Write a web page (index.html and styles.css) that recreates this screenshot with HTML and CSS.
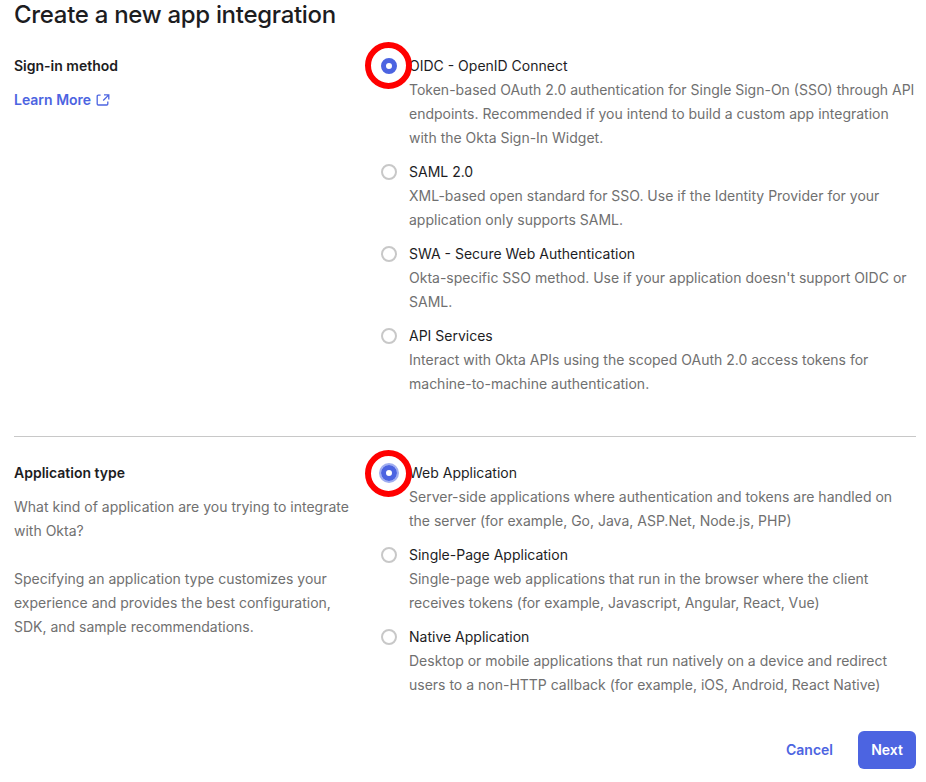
FILE: index.html
```html
<!DOCTYPE html>
<html lang="en">
<head>
<meta charset="utf-8">
<title>Create a new app integration</title>
<link rel="stylesheet" href="styles.css">
</head>
<body>
<main class="dialog">
  <h1 class="title">Create a new app integration</h1>
  <section class="section section-method">
    <div class="side">
      <h2 class="label">Sign-in method</h2>
      <a class="learn">Learn More
        <svg class="external" width="14" height="14" viewBox="0 0 14 14" fill="none" stroke="currentColor" stroke-width="1.3"><path d="M4.6 2.2H2.3Q1.2 2.2 1.2 3.3v7.6Q1.2 12 2.3 12h8.4Q11.8 12 11.8 10.9V8.4M8 1.9h4.8v4.5M12.6 2.1 7.2 7.5"/></svg>
      </a>
    </div>
    <div class="options">
      <div class="option"><span class="radio checked"><span class="ring"></span></span><div class="name">OIDC - OpenID Connect</div><div class="desc">Token-based OAuth 2.0 authentication for Single Sign-On (SSO) through API<br>endpoints. Recommended if you intend to build a custom app integration<br>with the Okta Sign-In Widget.</div></div>
      <div class="option"><span class="radio"></span><div class="name">SAML 2.0</div><div class="desc">XML-based open standard for SSO. Use if the Identity Provider for your<br>application only supports SAML.</div></div>
      <div class="option"><span class="radio"></span><div class="name">SWA - Secure Web Authentication</div><div class="desc">Okta-specific SSO method. Use if your application doesn't support OIDC or<br>SAML.</div></div>
      <div class="option"><span class="radio"></span><div class="name">API Services</div><div class="desc">Interact with Okta APIs using the scoped OAuth 2.0 access tokens for<br>machine-to-machine authentication.</div></div>
    </div>
  </section>
  <section class="section section-type">
    <div class="side">
      <h2 class="label">Application type</h2>
      <p class="hint">What kind of application are you trying to integrate<br>with Okta?</p>
      <p class="hint">Specifying an application type customizes your<br>experience and provides the best configuration,<br>SDK, and sample recommendations.</p>
    </div>
    <div class="options">
      <div class="option"><span class="radio checked focused"><span class="ring"></span></span><div class="name">Web Application</div><div class="desc">Server-side applications where authentication and tokens are handled on<br>the server (for example, Go, Java, ASP.Net, Node.js, PHP)</div></div>
      <div class="option"><span class="radio"></span><div class="name">Single-Page Application</div><div class="desc">Single-page web applications that run in the browser where the client<br>receives tokens (for example, Javascript, Angular, React, Vue)</div></div>
      <div class="option"><span class="radio"></span><div class="name">Native Application</div><div class="desc">Desktop or mobile applications that run natively on a device and redirect<br>users to a non-HTTP callback (for example, iOS, Android, React Native)</div></div>
    </div>
  </section>
  <footer class="actions"><button class="btn cancel">Cancel</button><button class="btn next">Next</button></footer>
</main>
</body>
</html>
```
FILE: styles.css
```css
* { box-sizing: border-box; }
body { margin: 0; background: #fff; color: #1d1d1f; font: 14px/24px Inter, sans-serif; overflow: hidden; }
.dialog { padding: 0 10px 0 14px; white-space: nowrap; }
.title { margin: 0; height: 54px; font-size: 24px; line-height: 30px; font-weight: 500; letter-spacing: -0.3px; }
.section { display: grid; grid-template-columns: 367px 1fr; }
.section-method { height: 383px; border-bottom: 1px solid #c8c8c8; }
.section-type { padding-top: 24px; height: 294px; }
.label { margin: 0 0 10px; font-size: 14px; font-weight: 600; line-height: 24px; }
.learn { display: inline-flex; align-items: center; gap: 5px; color: #4c64e1; font-weight: 600; }
.hint { margin: 0 0 24px; color: #707070; }
.option { display: grid; grid-template-columns: 28px 1fr; margin-bottom: 10px; }
.desc { grid-column: 2; color: #707070; }
.radio { position: relative; width: 16px; height: 16px; margin-top: 4px; border: 2px solid #c8c8c8; border-radius: 50%; }
.checked { border: 5px solid #4c64e1; }
.focused { box-shadow: 0 0 0 2px #a0aef0; }
.ring { position: absolute; width: 47px; height: 47px; left: -21px; top: -21px; border: 6px solid #f00; border-radius: 50%; }
.focused .ring { top: -20px; }
.actions { display: flex; justify-content: flex-end; gap: 12px; }
.btn { height: 38px; padding: 0 13px; border: 0; border-radius: 6px; font: 600 14px/24px Inter, sans-serif; }
.cancel { color: #4c64e1; background: none; }
.next { color: #fff; background: #4c64e1; width: 58px; }
```
